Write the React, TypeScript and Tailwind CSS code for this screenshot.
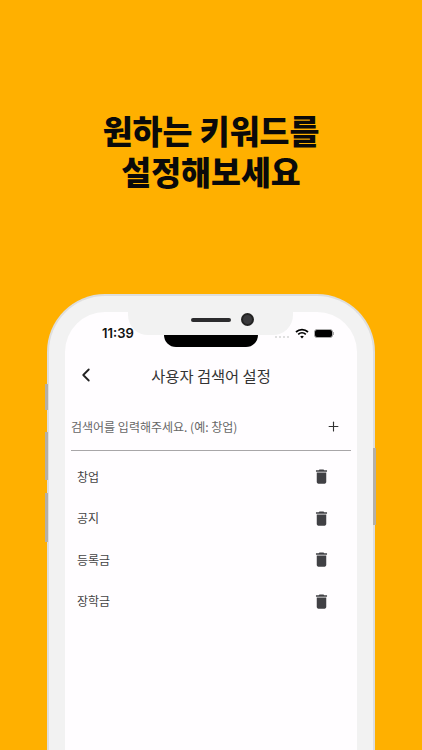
import { ChevronLeft, Plus } from 'lucide-react'
import { MdDelete } from 'react-icons/md'

const keywords = ['창업', '공지', '등록금', '장학금']

function StatusBar() {
  return (
    <div className="relative flex h-[29px] items-end justify-between pr-[23px] pl-[37px]">
      <span className="font-['Inter',sans-serif] text-[13px] leading-[16px] font-semibold text-[#111]">11:39</span>
      <div className="flex h-[16px] items-center gap-[5px]">
        <div className="mt-[7px] mr-[1px] flex gap-[2px]">
          {[0, 1, 2, 3].map((i) => (
            <span key={i} className="h-[2px] w-[2px] rounded-full bg-[#d4d4d4]" />
          ))}
        </div>
        <svg width="14" height="11" viewBox="0 0 14 11" fill="none" stroke="#000" strokeWidth="1.7">
          <path d="M1 4a9 9 0 0 1 12 0" />
          <path d="M3.2 6.3a5.8 5.8 0 0 1 7.6 0" />
          <path d="M7 10.5 5.2 8.4a2.8 2.8 0 0 1 3.6 0z" fill="#000" stroke="none" />
        </svg>
        <div className="flex items-center">
          <div className="h-[9px] w-[19px] rounded-[3px] border border-[#aaa] bg-black" />
          <div className="h-[3px] w-[1px] bg-[#aaa]" />
        </div>
      </div>
    </div>
  )
}

export default function App() {
  return (
    <div className="flex h-[750px] w-[422px] flex-col items-center overflow-hidden bg-[#FFB000] font-['Noto_Sans_CJK_KR','Noto_Sans',sans-serif]">
      <h1 className="mt-[109px] text-center text-[32.5px] leading-[41px] font-extrabold text-[#0a0a0a]">
        원하는 키워드를
        <br />
        설정해보세요
      </h1>

      <div className="relative mt-[103px] w-[328px] shrink-0">
        {/* side buttons */}
        <div className="absolute top-[90px] left-[-2px] h-[26px] w-[3px] bg-[#b5b0a6]" />
        <div className="absolute top-[138px] left-[-2px] h-[48px] w-[3px] bg-[#b5b0a6]" />
        <div className="absolute top-[199px] left-[-2px] h-[49px] w-[3px] bg-[#b5b0a6]" />
        <div className="absolute top-[154px] right-[-1px] h-[77px] w-[3px] bg-[#b5b0a6]" />

        <div className="h-[600px] rounded-t-[58px] border-[2px] border-b-0 border-[#dedede] bg-[#f2f2f2] px-[16px] pt-[16px]">
          <div className="relative h-[584px] rounded-t-[40px] bg-[#fffdff]">
            {/* notch */}
            <div className="absolute top-0 left-[63px] flex h-[23px] w-[165px] items-center justify-center gap-[10px] rounded-b-[20px] bg-[#f2f2f2] pb-[8px] pl-[24px]">
              <span className="h-[4px] w-[40px] rounded-full bg-[#2c2c2e]" />
              <span className="h-[13px] w-[13px] rounded-full border-[2px] border-[#222] bg-[#39393c]" />
            </div>
            <div className="absolute top-[23px] left-[99px] h-[12px] w-[94px] rounded-b-[14px] bg-black" />

            <StatusBar />

            <div className="relative mt-[12px] flex h-[44px] items-center justify-center">
              <ChevronLeft className="absolute left-[10px] text-[#222]" size={22} strokeWidth={2} />
              <span className="text-[15.3px] text-[#333]">사용자 검색어 설정</span>
            </div>

            <div className="mx-[6px] mt-[8px] flex h-[46px] items-center justify-between border-b border-[#a8a6a8] pb-[2px]">
              <span className="text-[12px] text-[#666]">검색어를 입력해주세요. (예: 창업)</span>
              <Plus className="mr-[10px] text-[#333]" size={15} strokeWidth={1.8} />
            </div>

            <div className="mt-[5px]">
              {keywords.map((k) => (
                <div key={k} className="flex h-[41.5px] items-center justify-between pr-[26px] pl-[12px]">
                  <span className="text-[12px] text-[#444]">{k}</span>
                  <MdDelete className="text-[#404044]" size={19} />
                </div>
              ))}
            </div>
          </div>
        </div>
      </div>
    </div>
  )
}
